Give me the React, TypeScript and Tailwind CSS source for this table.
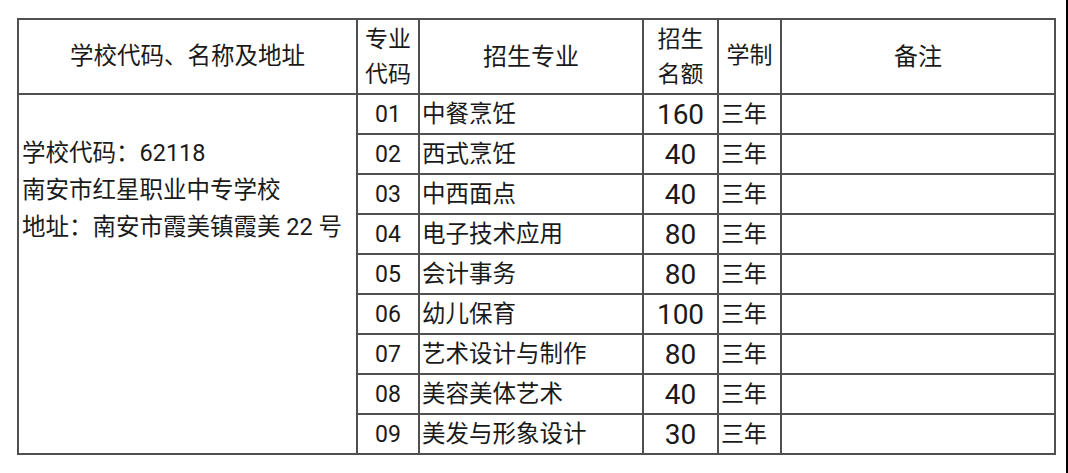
const rows = [
  { code: '01', name: '中餐烹饪', count: 160 },
  { code: '02', name: '西式烹饪', count: 40 },
  { code: '03', name: '中西面点', count: 40 },
  { code: '04', name: '电子技术应用', count: 80 },
  { code: '05', name: '会计事务', count: 80 },
  { code: '06', name: '幼儿保育', count: 100 },
  { code: '07', name: '艺术设计与制作', count: 80 },
  { code: '08', name: '美容美体艺术', count: 40 },
  { code: '09', name: '美发与形象设计', count: 30 },
]

export default function App() {
  return (
    <div
      className="flex h-[473px] w-[1068px] bg-white text-[#1a1a1a]"
      style={{ fontFamily: "Roboto, 'Noto Sans CJK SC', sans-serif" }}
    >
      <div className="ml-[17px] mt-[18px]">
        <div className="grid grid-cols-[337px_60px_222px_73px_61px_272px] grid-rows-[73px_repeat(9,38px)] gap-[2px] bg-[#505050] p-[2px]">
          <div className="flex items-center justify-center bg-white text-[23.5px]">
            学校代码、名称及地址
          </div>
          <div className="flex flex-col items-center justify-center bg-white text-[23px] leading-[35px]">
            <span>专业</span>
            <span>代码</span>
          </div>
          <div className="flex items-center justify-center bg-white text-[24px]">
            招生专业
          </div>
          <div className="flex flex-col items-center justify-center bg-white text-[23px] leading-[35px]">
            <span>招生</span>
            <span>名额</span>
          </div>
          <div className="flex items-center justify-center bg-white text-[23px]">
            学制
          </div>
          <div className="flex items-center justify-center bg-white text-[24px]">
            备注
          </div>

          {/* school info spans every body row */}
          <div className="row-span-9 flex flex-col bg-white pl-[3px] pt-[40px] text-[23.5px] leading-[37px]">
            <span>学校代码：62118</span>
            <span>南安市红星职业中专学校</span>
            <span>地址：南安市霞美镇霞美 22 号</span>
          </div>

          {rows.map((r) => (
            <div key={r.code} className="contents">
              <div className="flex items-center justify-center bg-white pt-[2px] text-[23px]">
                {r.code}
              </div>
              <div className="flex items-center bg-white pl-[2px] pt-[2px] text-[23.5px]">
                {r.name}
              </div>
              <div className="flex items-center justify-center bg-white pt-[2px] text-[28px]">
                {r.count}
              </div>
              <div className="flex items-center bg-white pl-[2px] pt-[2px] text-[23px]">
                三年
              </div>
              <div className="bg-white" />
            </div>
          ))}
        </div>
      </div>
      <div className="flex-1" />
      <div className="h-full w-[2px] bg-black" />
    </div>
  )
}
